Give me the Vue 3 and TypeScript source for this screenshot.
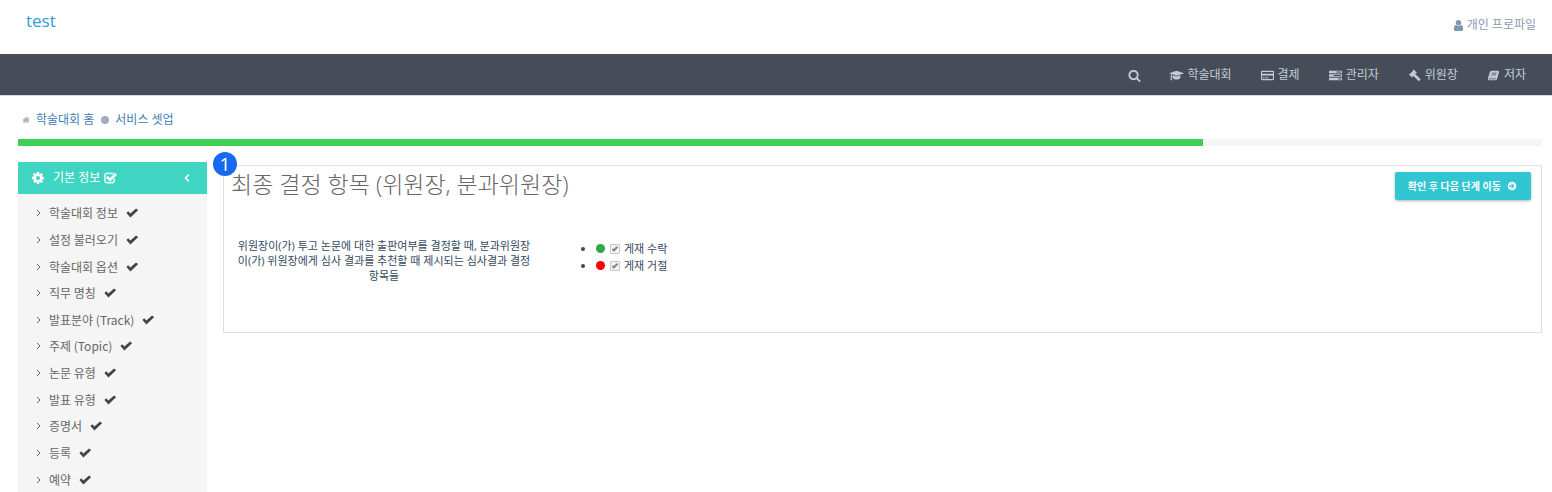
<script setup lang="ts">
import { ref } from 'vue'

interface NavItem { label: string; icon: string }
interface Choice { id: string; label: string; tone: string }

const icons: Record<string, string> = {
  search: 'M1216 832q0-185-131.500-316.500t-316.500-131.500-316.500 131.500-131.500 316.500 131.500 316.500 316.500 131.500 316.500-131.500 131.500-316.500zm512 832q0 52-38 90t-90 38q-54 0-90-38l-343-342q-179 124-399 124-143 0-273.500-55.500t-225-150-150-225-55.500-273.500 55.500-273.500 150-225 225-150 273.500-55.500 273.500 55.500 225 150 150 225 55.500 273.500q0 220-124 399l343 343q37 37 37 90z',
  user: 'M1536 1399q0 109-62.500 187t-150.500 78h-854q-88 0-150.500-78t-62.500-187q0-85 8.500-160.500t31.500-152 58.500-131 94-89 134.500-34.500q131 128 313 128t313-128q76 0 134.500 34.500t94 89 58.500 131 31.500 152 8.500 160.500zm-256-887q0 159-112.500 271.500t-271.500 112.500-271.500-112.500-112.500-271.500 112.500-271.500 271.500-112.500 271.500 112.500 112.500 271.500z',
  home: 'M1472 992v480q0 26-19 45t-45 19h-384v-384h-256v384h-384q-26 0-45-19t-19-45v-480q0-1 .5-3t.5-3l575-474 575 474q1 2 1 6zm223-69l-62 74q-8 9-21 11h-3q-13 0-21-7l-692-577-692 577q-12 8-24 7-13-2-21-11l-62-74q-8-10-7-23.500t11-21.500l719-599q32-26 76-26t76 26l244 204v-195q0-14 9-23t23-9h192q14 0 23 9t9 23v408l219 182q10 8 11 21.500t-7 23.500z',
  cog: 'M1152 896q0-106-75-181t-181-75-181 75-75 181 75 181 181 75 181-75 75-181zm512-109v222q0 12-8 23t-20 13l-185 28q-19 54-39 91 35 50 107 138 10 12 10 25t-9 23q-27 37-99 108t-94 71q-12 0-26-9l-138-108q-44 23-91 38-16 136-29 186-7 28-36 28h-222q-14 0-24.500-8.500t-11.500-21.500l-28-184q-49-16-90-37l-141 107q-10 9-25 9-14 0-25-11-126-114-165-168-7-10-7-23 0-12 8-23 15-21 51-66.500t54-70.500q-27-50-41-99l-183-27q-13-2-21-12.500t-8-23.500v-222q0-12 8-23t19-13l186-28q14-46 39-92-40-57-107-138-10-12-10-24 0-10 9-23 26-36 98.500-107.500t94.500-71.500q13 0 26 10l138 107q44-23 91-38 16-136 29-186 7-28 36-28h222q14 0 24.500 8.500t11.500 21.500l28 184q49 16 90 37l142-107q9-9 24-9 13 0 25 10 129 119 165 170 7 8 7 22 0 12-8 23-15 21-51 66.500t-54 70.500q26 50 41 98l183 28q13 2 21 12.500t8 23.500z',
  checkSquare: 'M1472 930v318q0 119-84.500 203.500t-203.500 84.500h-832q-119 0-203.500-84.500t-84.500-203.500v-832q0-119 84.500-203.500t203.500-84.500h832q63 0 117 25 15 7 18 23 3 17-9 29l-49 49q-10 10-23 10-3 0-9-2-23-6-45-6h-832q-66 0-113 47t-47 113v832q0 66 47 113t113 47h832q66 0 113-47t47-113v-254q0-13 9-22l64-64q10-10 23-10 6 0 12 3 20 8 20 29zm231-489l-814 814q-24 24-57 24t-57-24l-430-430q-24-24-24-57t24-57l110-110q24-24 57-24t57 24l263 263 647-647q24-24 57-24t57 24l110 110q24 24 24 57t-24 57z',
  cap: 'M896 250L1960 590 896 930 310 740Q230 790 222 930 285 965 285 1035 285 1100 230 1135L275 1540H55L112 1135Q56 1100 56 1035 56 965 118 930 125 790 175 690L-140 590ZM380 860L896 1028 1412 860 1440 1180Q1430 1300 1270 1370 1110 1440 896 1440 690 1440 522 1370 362 1300 352 1180Z',
  card: 'M160 256H1632Q1792 256 1792 416V1376Q1792 1536 1632 1536H160Q0 1536 0 1376V416Q0 256 160 256ZM150 400V640H1642V400ZM150 896V1390H1642V896ZM256 1132H512V1270H256ZM640 1132H1024V1270H640Z',
  tasks: 'M0 236H1792V586H0ZM1024 352V470H1664V352ZM0 721H1792V1071H0ZM640 837V955H1664V837ZM0 1206H1792V1556H0ZM1280 1322V1440H1664V1322Z',
  gavel: 'M780 70L1220 510 1120 610 1060 600 1000 700 1750 1430 1500 1680 750 960 650 1020 660 1080 560 1180 120 740 220 640 290 650 700 240 680 170Z',
  book: 'M610 230H1560Q1710 250 1670 400L1370 1400Q1330 1536 1180 1536H310Q110 1520 110 1330L400 430Q450 260 610 230ZM680 530L650 630H1320L1350 530ZM600 760L570 860H1240L1270 760ZM250 1310Q240 1400 340 1410H1180L1230 1310Z',
  arrow: 'M896 128A768 768 0 1 1 896 1664 768 768 0 1 1 896 128ZM860 420L740 540 960 770H400V1020H960L740 1250 860 1370 1335 895Z',
  ok: 'M60 900L330 640 650 960 1500 220 1800 460 660 1570Z',
}

const nav: NavItem[] = [
  { label: '학술대회', icon: 'cap' },
  { label: '결제', icon: 'card' },
  { label: '관리자', icon: 'tasks' },
  { label: '위원장', icon: 'gavel' },
  { label: '저자', icon: 'book' },
]
const steps: string[] = [
  '학술대회 정보', '설정 불러오기', '학술대회 옵션', '직무 명칭', '발표분야 (Track)',
  '주제 (Topic)', '논문 유형', '발표 유형', '증명서', '등록', '예약',
]
const choices: Choice[] = [
  { id: 'accept', label: '게재 수락', tone: 'green' },
  { id: 'reject', label: '게재 거절', tone: 'red' },
]
const progress = ref(1185 / 1524 * 100)
</script>

<template>
  <div class="page">
    <header class="top">
      <a class="brand" href="#">test</a>
      <a class="profile" href="#">
        <svg class="icon" viewBox="0 0 1792 1792"><path :d="icons.user" /></svg>개인 프로파일
      </a>
    </header>
    <nav class="nav">
      <button class="search" type="button" aria-label="검색">
        <svg class="icon" viewBox="0 0 1792 1792"><path :d="icons.search" /></svg>
      </button>
      <a v-for="n in nav" :key="n.label" href="#">
        <svg class="icon" viewBox="0 0 1792 1792"><path fill-rule="evenodd" :d="icons[n.icon]" /></svg>{{ n.label }}
      </a>
    </nav>
    <div class="content">
      <div class="crumbs">
        <svg class="home" viewBox="0 0 1792 1792"><path :d="icons.home" /></svg>
        <a href="#">학술대회 홈</a>
        <span class="dot"></span>
        <a href="#">서비스 셋업</a>
      </div>
      <div class="track"><div class="bar" :style="{ width: progress + '%' }"></div></div>
      <div class="columns">
        <aside class="side">
          <button class="head" type="button">
            <svg class="cog" viewBox="0 0 1792 1792"><path :d="icons.cog" /></svg>
            <span>기본 정보</span>
            <svg class="icon" viewBox="0 0 1792 1792"><path :d="icons.checkSquare" /></svg>
            <svg class="fold" viewBox="0 0 6 10"><path d="M5 1.500L1.500 5l3.500 3.500" /></svg>
          </button>
          <ul class="steps">
            <li v-for="s in steps" :key="s">
              <a href="#">
                <svg class="chev" viewBox="0 0 5 8"><path d="M1 1l3 3-3 3" /></svg>
                <span>{{ s }}</span>
                <svg class="ok" viewBox="0 0 1792 1792"><path :d="icons.ok" /></svg>
              </a>
            </li>
          </ul>
        </aside>
        <main class="panel">
          <span class="marker">1</span>
          <div class="panel-head">
            <h1>최종 결정 항목 (위원장, 분과위원장)</h1>
            <button class="next" type="button">
              확인 후 다음 단계 이동
              <svg viewBox="0 0 1792 1792"><path fill-rule="evenodd" :d="icons.arrow" /></svg>
            </button>
          </div>
          <div class="form">
            <p>위원장이(가) 투고 논문에 대한 출판여부를 결정할 때, 분과위원장이(가) 위원장에게 심사 결과를 추천할 때 제시되는 심사결과 결정 항목들</p>
            <ul>
              <li v-for="c in choices" :key="c.id">
                <div class="choice">
                  <span class="light" :class="c.tone"></span>
                  <input :id="c.id" type="checkbox" checked disabled />
                  <label :for="c.id">{{ c.label }}</label>
                </div>
              </li>
            </ul>
          </div>
        </main>
      </div>
    </div>
  </div>
</template>

<style>
html { overflow: hidden; }
body { margin: 0; background: #fff; }
</style>

<style scoped>
.page {
  font-family: "Open Sans", "Noto Sans CJK KR", sans-serif;
  font-size: 12px;
  line-height: 18px;
  color: #34495e;
}
svg { fill: currentColor; flex: none; }
a { text-decoration: none; color: inherit; }
button { font: inherit; border: 0; color: inherit; cursor: pointer; }
ul { margin: 0; padding: 0; }
.icon { width: 13px; height: 13px; overflow: visible; }
.top {
  height: 54px;
  padding: 0 16px 0 26px;
  display: flex;
  justify-content: space-between;
  align-items: flex-start;
}
.brand { font-size: 17px; line-height: 22px; padding-top: 10px; color: #2f9bd8; }
.profile { display: flex; align-items: center; gap: 2px; padding-top: 16px; color: #8b9bb0; }
.profile .icon { color: #7f96b2; }
.nav {
  height: 42px;
  background: #464d58;
  color: #c3cbd9;
  display: flex;
  justify-content: flex-end;
  align-items: center;
  gap: 29px;
  padding: 1px 26px 0 0;
  border-bottom: 1px solid #d7dbe1;
  box-sizing: border-box;
}
.nav a { display: flex; align-items: center; gap: 4px; }
.search { display: flex; padding: 0; background: none; }
.content { padding: 0 10px 0 18px; }
.crumbs { display: flex; align-items: center; height: 18px; padding: 15px 0 10px 4px; color: #3f7db5; }
.home { width: 8px; height: 8px; color: #a3adba; margin-right: 6px; }
.dot { width: 8px; height: 8px; border-radius: 50%; background: #a3adba; margin: 0 6px 0 7px; }
.track { height: 7px; background: #f5f5f5; }
.bar { height: 7px; background: #3fcf55; }
.columns { display: flex; align-items: flex-start; padding-top: 16px; gap: 16px; }
.side { width: 189px; flex: none; background: #f5f5f5; }
.head {
  width: 100%;
  height: 32px;
  display: flex;
  align-items: center;
  padding: 0 17px 0 13px;
  background: #40d5c2;
  color: #fff;
}
.cog { width: 14px; height: 14px; margin-right: 8px; }
.head .icon { margin-left: 4px; stroke: currentColor; stroke-width: 60; }
.fold { width: 6px; height: 10px; margin-left: auto; }
.fold path, .chev path { fill: none; stroke: currentColor; stroke-width: 1.500; }
.chev path { stroke-width: 1; }
.steps {
  list-style: none;
  display: grid;
  grid-auto-rows: 1fr;
  height: 293px;
  padding: 6px 0;
  font-family: "Noto Sans CJK KR", sans-serif;
}
.steps a { display: flex; align-items: center; height: 100%; padding-left: 18px; color: #666; }
.chev { width: 5px; height: 8px; margin-right: 8px; }
.ok { width: 12px; height: 12px; margin-left: 8px; color: #444; }
.panel {
  flex: 1;
  position: relative;
  margin-top: 3px;
  border: 1px solid #dfdfdf;
  box-sizing: border-box;
  padding: 6px 10px 49px 7px;
}
.marker {
  position: absolute;
  left: -11px;
  top: -14px;
  width: 24px;
  height: 24px;
  border-radius: 50%;
  background: #1769f0;
  color: #fff;
  font-size: 19px;
  line-height: 24px;
  text-align: center;
}
.panel-head { display: flex; justify-content: space-between; align-items: flex-start; }
h1 { margin: 0; font-size: 23px; line-height: 24px; font-weight: 300; color: #666; }
.next {
  display: flex;
  align-items: center;
  gap: 6px;
  height: 28px;
  padding: 0 14px 0 13px;
  background: #32c5d2;
  color: #fff;
  font-size: 10px;
  font-weight: 700;
  border-radius: 2px;
  box-shadow: 0 1px 3px rgba(0, 0, 0, 0.3);
}
.next svg { width: 10px; height: 10px; }
.form { display: flex; padding-top: 38px; font-size: 11px; line-height: 15px; }
p { margin: 0; padding: 0 3px; width: 300px; text-align: center; }
.form ul { margin-left: 59px; padding-top: 2px; font-size: 11px; line-height: 17px; }
.choice { display: flex; align-items: center; height: 17px; }
.light { width: 9px; height: 9px; border-radius: 50%; margin-right: 5px; }
.green { background: #2fa84a; }
.red { background: #f00; }
input {
  appearance: none;
  width: 10px;
  height: 10px;
  margin: 0 4px 0 0;
  border: 1px solid #c8c8c8;
  border-radius: 1px;
  background: #f3f3f3;
  box-sizing: border-box;
  display: grid;
  place-items: center;
}
input::after {
  content: "";
  width: 6px;
  height: 3px;
  border-left: 2px solid #888;
  border-bottom: 2px solid #888;
  box-sizing: border-box;
  transform: rotate(-45deg);
}
</style>
